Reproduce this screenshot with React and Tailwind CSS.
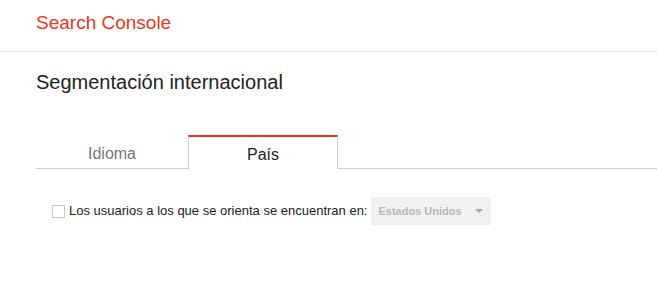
export default function App() {
  return (
    <div className="w-[657px] h-[303px] bg-white overflow-hidden font-['Liberation_Sans',Arial,sans-serif]">
      {/* Cabecera */}
      <div className="h-[52px] border-b border-[#e5e5e5] flex items-center pl-9">
        <span className="text-[19px] text-[#e8371f] leading-none pb-[7px]">Search Console</span>
      </div>

      <div className="pl-9">
        <h1 className="text-[20px] text-[#222] leading-none pt-[20px]">Segmentación internacional</h1>

        {/* Pestañas */}
        <div className="flex mt-[43px] h-[34px] border-b border-[#ccc]">
          <div className="w-[152px] flex items-center justify-center text-[16px] text-[#777] pt-[4px]">Idioma</div>
          <div className="w-[150px] -mb-px bg-white border-t-2 border-t-[#e8371f] border-x border-x-[#ccc] flex items-center justify-center text-[16px] text-[#222] pt-[3px]">País</div>
        </div>

        {/* Opción país */}
        <div className="flex items-center mt-[28px] pl-4">
          <span className="w-[13px] h-[13px] border border-[#c6c6c6] bg-white" />
          <span className="ml-[4px] text-[13px] text-[#222]">Los usuarios a los que se orienta se encuentran en:</span>
          <div className="ml-[4px] w-[120px] h-[28px] bg-[#f1f1f1] flex items-center justify-between pl-[7px] pr-[8px]">
            <span className="text-[11px] font-bold text-[#b8b8b8]">Estados Unidos</span>
            <span className="w-0 h-0 border-x-[4px] border-x-transparent border-t-[4px] border-t-[#aaa]" />
          </div>
        </div>
      </div>
    </div>
  );
}
